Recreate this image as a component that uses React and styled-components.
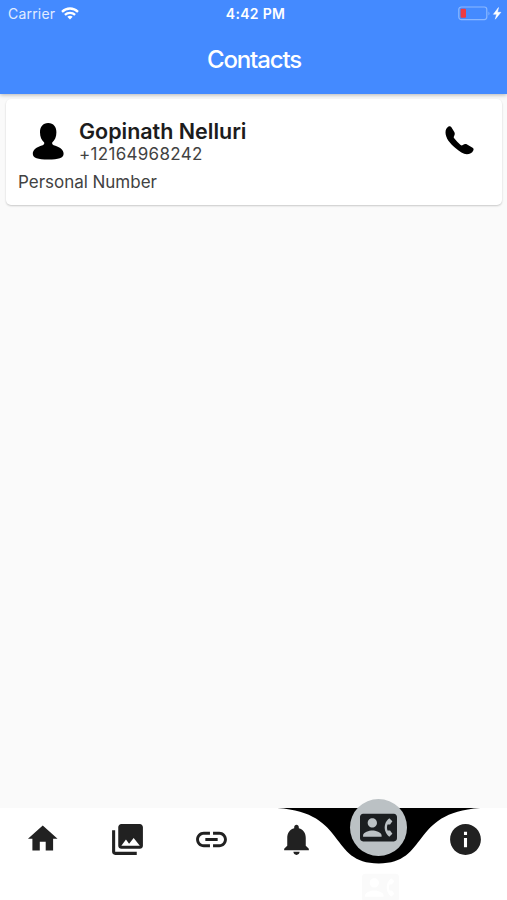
import React from 'react'
import styled, { createGlobalStyle } from 'styled-components'
import { MdHome, MdLink, MdInfo } from 'react-icons/md'

const GlobalStyle = createGlobalStyle`
  * {
    box-sizing: border-box;
  }
  body {
    margin: 0;
    background: #fafafa;
    font-family: Inter, 'Liberation Sans', sans-serif;
  }
`

const Screen = styled.div`
  display: flex;
  flex-direction: column;
  width: 507px;
  height: 900px;
  overflow: hidden;
  background: #fafafa;
`

const Header = styled.header`
  flex: none;
  height: 94px;
  background: #448aff;
  color: #fff;
  box-shadow: 0 1px 4px rgba(0, 0, 0, 0.28);
`

const StatusBar = styled.div`
  display: grid;
  grid-template-columns: 1fr auto 1fr;
  align-items: center;
  height: 27px;
  padding: 0 5px 0 8px;
`

const Carrier = styled.div`
  display: flex;
  align-items: center;
  gap: 6px;
  font-size: 14px;
  letter-spacing: 0.2px;
  color: #e1ecff;
`

const Clock = styled.div`
  padding-left: 1px;
  font-size: 14px;
  font-weight: 600;
  letter-spacing: 0.3px;
`

const Power = styled.div`
  display: flex;
  justify-content: flex-end;
`

const Title = styled.h1`
  margin: 0;
  padding: 18px 0 0 1px;
  font-size: 24px;
  line-height: 30px;
  font-weight: 500;
  letter-spacing: -1.15px;
  text-align: center;
`

const List = styled.main`
  flex: 1;
  padding: 5px 5px 0 6px;
`

const Card = styled.article`
  height: 106px;
  padding: 20px 28px 0 12px;
  border-radius: 5px;
  background: #fff;
  box-shadow: 0 1px 2px rgba(0, 0, 0, 0.2);
`

const Person = styled.div`
  display: flex;
  align-items: flex-start;
  padding-left: 14px;
`

const Avatar = styled.svg`
  flex: none;
  margin: 4px 15px 0 0;
`

const PersonText = styled.div`
  flex: 1;
`

const Name = styled.h2`
  margin: 0;
  font-size: 21.5px;
  line-height: 25px;
  font-weight: 600;
  letter-spacing: -0.02px;
  color: #1c1c1c;
`

const Detail = styled.p`
  margin: ${props => props.$top || '0'} 0 0;
  font-size: 17px;
  line-height: 20px;
  letter-spacing: ${props => props.$spacing || '0.3px'};
  color: #424242;
`

const Call = styled.svg`
  flex: none;
  margin-top: 7px;
`

const TabBar = styled.nav`
  position: relative;
  flex: none;
  display: grid;
  grid-template-columns: repeat(6, 1fr);
  height: 92px;
  background: #fff;
  color: #212121;
`

const Tab = styled.div`
  display: flex;
  justify-content: center;
  padding: 13px 0 0 1px;
  z-index: 1;
`

const Notch = styled.svg`
  position: absolute;
  top: 0;
  left: 277px;
`

const ActiveTab = styled.div`
  position: relative;
`

const Bubble = styled.div`
  position: absolute;
  top: -9px;
  left: 12px;
  z-index: 2;
  display: flex;
  align-items: center;
  justify-content: center;
  width: 57px;
  height: 57px;
  border-radius: 50%;
  background: #bbc1c4;
  color: #1b1e20;
`

const Ghost = styled.div`
  position: absolute;
  top: 61px;
  left: 24px;
  height: 37px;
  color: #fafafa;
`

const WifiIcon = () => (
  <svg width="18" height="13" viewBox="0 0 18 13" fill="none" stroke="#fff" strokeWidth="2.3">
    <path d="M1 4.8C5.6.4 12.4.4 17 4.8" />
    <path d="M3.9 7.8C6.8 5.1 11.2 5.1 14.1 7.8" />
    <path d="M9 12.5L6.3 9.8Q9 7.5 11.7 9.8Z" fill="#fff" stroke="none" />
  </svg>
)

const BatteryIcon = () => (
  <svg width="44" height="15" viewBox="0 0 44 15">
    <rect x="0.8" y="1" width="28" height="12.6" rx="2.5" fill="none" stroke="#8bb8ff" strokeWidth="1.2" />
    <rect x="2.6" y="2.8" width="5.4" height="9" rx="1" fill="#ec3b43" />
    <path d="M30.5 5.5q2 2 0 4z" fill="#8bb8ff" />
    <path d="M40.5 1.5L35.4 8.3h3.2L37.3 13.2 42.9 6.3h-3.4z" fill="#fff" stroke="#fff" strokeWidth="0.5" />
  </svg>
)

const HomeIcon = () => (
  <MdHome size={35.5} />
)

const GalleryIcon = () => (
  <svg width="37" height="37" viewBox="0 0 24 24" fill="currentColor">
    <path d="M22 16V4c0-1.1-.9-2-2-2H8c-1.1 0-2 .9-2 2v12c0 1.1.9 2 2 2h12c1.1 0 2-.9 2-2zm-11-4l2.03 2.71L16 11l4 5H8l3-4zM2 6v14c0 1.1.9 2 2 2h14v-2H4V6H2z" />
  </svg>
)

const BellIcon = () => (
  <svg width="37" height="37" viewBox="0 0 24 24" fill="currentColor">
    <path d="M12 22c1.1 0 2-.9 2-2h-4c0 1.1.9 2 2 2zm6-6v-5c0-3.07-1.64-5.64-4.5-6.32V4c0-.83-.67-1.5-1.5-1.5s-1.5.67-1.5 1.5v.68C7.63 5.36 6 7.92 6 11v5l-2 2v1h16v-1l-2-2z" />
  </svg>
)

const ContactIcon = () => (
  <svg width="37" height="37" viewBox="0 0 24 24" fill="currentColor">
    <path d="M22 3H2C.9 3 0 3.9 0 5v14c0 1.1.9 2 2 2h20c1.100 0 1.990-.9 1.990-2L24 5c0-1.100-.9-2-2-2zM8 6c1.660 0 3 1.340 3 3s-1.340 3-3 3-3-1.340-3-3 1.340-3 3-3zm6 12H2v-1c0-2 4-3.100 6-3.100s6 1.100 6 3.100v1zm3.850-4h1.640L21 16l-1.990 1.990c-1.310-.98-2.280-2.380-2.730-3.990-.18-.64-.28-1.310-.28-2s.1-1.360.28-2c.45-1.620 1.420-3.010 2.730-3.990L21 8l-1.510 2h-1.640c-.22.63-.35 1.300-.35 2s.13 1.370.35 2z" />
  </svg>
)

const tabs = [HomeIcon, GalleryIcon, MdLink, BellIcon, null, MdInfo]

const App = () => (
  <Screen>
    <GlobalStyle />
    <Header>
      <StatusBar>
        <Carrier>
          Carrier
          <WifiIcon />
        </Carrier>
        <Clock>4:42 PM</Clock>
        <Power>
          <BatteryIcon />
        </Power>
      </StatusBar>
      <Title>Contacts</Title>
    </Header>
    <List>
      <Card>
        <Person>
          <Avatar width="32" height="37" viewBox="0 0 32 37">
            <path d="M16.2 0C10.8 0 8 4 8 9.2c0 4.7 1.5 8 4.2 10.2.3 1.8-.5 2.6-3.2 3.4C4 24.3.8 27.2.8 30.7c0 4.3 5 5.8 15.4 5.8s15.4-1.5 15.4-5.8c0-3.5-3.2-6.4-8.2-7.9-2.7-.8-3.500-1.600-3.200-3.400 2.700-2.200 4.200-5.500 4.200-10.200C24.400 4 21.600 0 16.200 0z" />
          </Avatar>
          <PersonText>
            <Name>Gopinath Nelluri</Name>
            <Detail>+12164968242</Detail>
          </PersonText>
          <Call width="29" height="29" viewBox="0 0 29 29">
            <path d="M3.200.8C4.500 0 5.600.2 6.400 1.300L9.300 6c.7 1.300.6 2.600-.2 3.900-.5.9-.5 1.600.1 2.400 1.900 2.500 4 4.700 6.400 6.700.8.6 1.500.5 2.300-.1 1.300-.9 2.700-1.200 4.200-.4l5.500 3.300c1 .6 1.300 1.500.7 2.700-1.200 2.600-3.500 3.700-6.500 3.700-3.500 0-7-2.300-11.400-6.100C5 17.500.5 12 .5 6.500.5 3.900 1.500 1.800 3.200.8z" />
          </Call>
        </Person>
        <Detail $top="8px" $spacing="-0.02px">Personal Number</Detail>
      </Card>
    </List>
    <TabBar>
      <Notch width="204" height="56" viewBox="0 0 204 56">
        <path d="M.4 0C71.4 4.6 51.1 55.4 101.8 55.4S132.2 4.6 203.2 0Z" />
      </Notch>
      {tabs.map((Icon, i) => Icon ? (
        <Tab key={i}>
          <Icon size={37} />
        </Tab>
      ) : (
        <ActiveTab key={i}>
          <Bubble>
            <ContactIcon />
          </Bubble>
          <Ghost>
            <ContactIcon />
          </Ghost>
        </ActiveTab>
      ))}
    </TabBar>
  </Screen>
)

export default App
